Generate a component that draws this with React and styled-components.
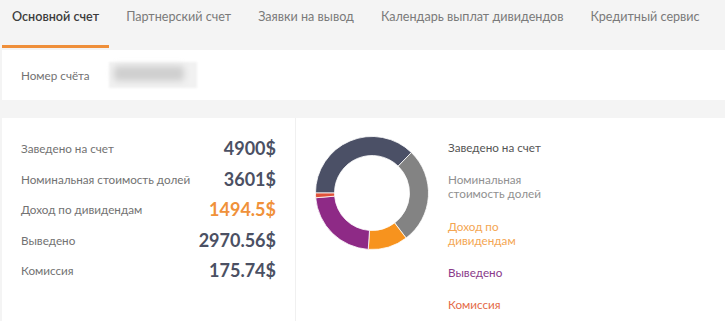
import React from "react";
import styled, { createGlobalStyle } from "styled-components";

const GlobalStyle = createGlobalStyle`
  body {
    margin: 0;
    background: #f4f4f4;
    font-family: Lato, "Open Sans", sans-serif;
  }
`;

const Page = styled.div`
  width: 725px;
  height: 321px;
  overflow: hidden;
  background: #f4f4f4;
`;

const Tabs = styled.div`
  display: flex;
  gap: 7px;
  height: 48px;
  padding-left: 2px;
`;

const Tab = styled.div`
  box-sizing: border-box;
  height: 48px;
  padding: 9px 10px 0;
  font-size: 12.6px;
  line-height: 16px;
  white-space: nowrap;
  color: ${(p) => (p.active ? "#3c3c3c" : "#7a7a7a")};
  font-weight: ${(p) => (p.active ? 600 : 400)};
  border-bottom: 3px solid ${(p) => (p.active ? "#ef8f3a" : "transparent")};
`;

const AccountStrip = styled.div`
  display: flex;
  align-items: center;
  gap: 19px;
  height: 50px;
  margin: 2px 0 0 2px;
  padding-left: 19px;
  background: #fff;
`;

const Label = styled.span`
  font-size: 11.7px;
  color: ${(p) => p.color || "#727272"};
`;

const Masked = styled.div`
  position: relative;
  width: 88px;
  height: 26px;
  background: #f1f1f1;
  filter: blur(1px);

  &::after {
    content: "";
    position: absolute;
    left: 5px;
    top: 4px;
    width: 70px;
    height: 15px;
    border-radius: 4px;
    background: #cfcfcf;
    filter: blur(3px);
  }
`;

const Panels = styled.div`
  display: flex;
  margin: 18px 0 0 2px;
  height: 203px;
`;

const Summary = styled.div`
  box-sizing: border-box;
  width: 294px;
  padding: 15px 19px 0;
  background: #fff;
  border-right: 1px solid #f0f0f0;
`;

const Row = styled.div`
  display: flex;
  justify-content: space-between;
  align-items: center;
  height: 30.5px;
`;

const Value = styled.span`
  font-size: 18px;
  font-weight: 700;
  color: ${(p) => p.color || "#4b5063"};
`;

const ChartPanel = styled.div`
  flex: 1;
  display: flex;
  gap: 19px;
  padding: 18px 0 0 19px;
  background: #fff;
`;

const Legend = styled.div`
  display: flex;
  flex-direction: column;
  gap: 18.3px;
  width: 100px;
  padding-top: 4px;
`;

const LegendItem = styled.div`
  font-size: 11.7px;
  line-height: 14px;
  color: ${(p) => p.color};
`;

const data = [
  { label: "Заведено на счет", value: 4900, text: "4900$", color: "#4b5066", legend: "#555555" },
  { label: "Номинальная стоимость долей", value: 3601, text: "3601$", color: "#838383", legend: "#909090" },
  { label: "Доход по дивидендам", value: 1494.5, text: "1494.5$", color: "#f7931e", legend: "#f4a652", valueColor: "#f0913a" },
  { label: "Выведено", value: 2970.56, text: "2970.56$", color: "#8e2a86", legend: "#8a3a8a" },
  { label: "Комиссия", value: 175.74, text: "175.74$", color: "#e0533a", legend: "#e46a48" },
];

const Donut = () => {
  const cx = 57;
  const cy = 57;
  const ro = 56.5;
  const ri = 37.5;
  const total = data.reduce((s, d) => s + d.value, 0);
  let angle = 270;
  const pt = (r, a) => {
    const rad = (a * Math.PI) / 180;
    return [cx + r * Math.sin(rad), cy - r * Math.cos(rad)];
  };
  return (
    <svg width="114" height="114" viewBox="0 0 114 114">
      {data.map((d) => {
        const sweep = (d.value / total) * 360;
        const a0 = angle;
        const a1 = angle + sweep;
        angle = a1;
        const large = sweep > 180 ? 1 : 0;
        const [x0, y0] = pt(ro, a0);
        const [x1, y1] = pt(ro, a1);
        const [x2, y2] = pt(ri, a1);
        const [x3, y3] = pt(ri, a0);
        const path = `M${x0} ${y0} A${ro} ${ro} 0 ${large} 1 ${x1} ${y1} L${x2} ${y2} A${ri} ${ri} 0 ${large} 0 ${x3} ${y3} Z`;
        return <path key={d.label} d={path} fill={d.color} stroke="#fff" strokeWidth="0.8" />;
      })}
    </svg>
  );
};

export default function App() {
  return (
    <Page>
      <GlobalStyle />
      <Tabs>
        <Tab active>Основной счет</Tab>
        <Tab>Партнерский счет</Tab>
        <Tab>Заявки на вывод</Tab>
        <Tab>Календарь выплат дивидендов</Tab>
        <Tab>Кредитный сервис</Tab>
      </Tabs>
      <AccountStrip>
        <Label>Номер счёта</Label>
        <Masked />
      </AccountStrip>
      <Panels>
        <Summary>
          {data.map((d) => (
            <Row key={d.label}>
              <Label>{d.label}</Label>
              <Value color={d.valueColor}>{d.text}</Value>
            </Row>
          ))}
        </Summary>
        <ChartPanel>
          <Donut />
          <Legend>
            {data.map((d) => (
              <LegendItem key={d.label} color={d.legend}>
                {d.label}
              </LegendItem>
            ))}
          </Legend>
        </ChartPanel>
      </Panels>
    </Page>
  );
}
